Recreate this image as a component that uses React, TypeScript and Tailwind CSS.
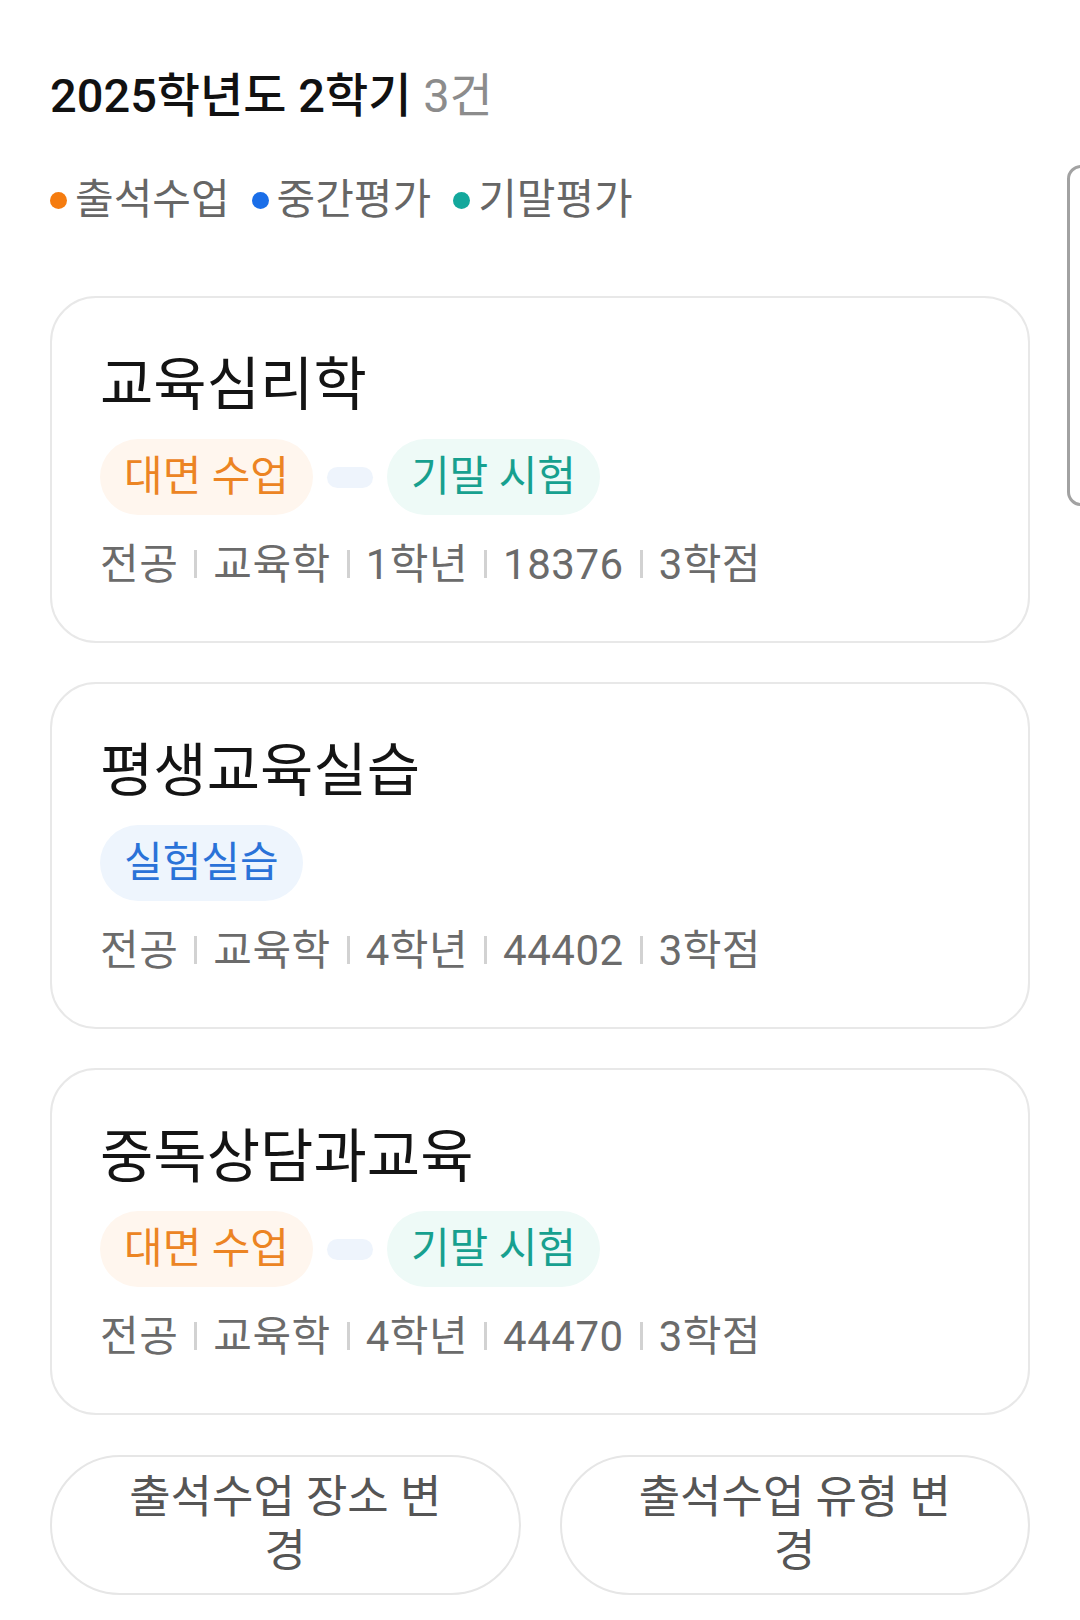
import React from 'react';

type Tag = { label: string; tone: 'orange' | 'teal' | 'blue' };

type Course = {
  name: string;
  tags: Tag[];
  meta: string[];
};

const courses: Course[] = [
  {
    name: '교육심리학',
    tags: [
      { label: '대면 수업', tone: 'orange' },
      { label: '기말 시험', tone: 'teal' },
    ],
    meta: ['전공', '교육학', '1학년', '18376', '3학점'],
  },
  {
    name: '평생교육실습',
    tags: [{ label: '실험실습', tone: 'blue' }],
    meta: ['전공', '교육학', '4학년', '44402', '3학점'],
  },
  {
    name: '중독상담과교육',
    tags: [
      { label: '대면 수업', tone: 'orange' },
      { label: '기말 시험', tone: 'teal' },
    ],
    meta: ['전공', '교육학', '4학년', '44470', '3학점'],
  },
];

function TagPill({ tag }: { tag: Tag }) {
  // 톤별 색상은 클래스 그대로 적어둔다 (동적 조합 금지)
  const cls =
    tag.tone === 'orange'
      ? 'bg-[#fff6ee] text-[#ec8423]'
      : tag.tone === 'teal'
        ? 'bg-[#eefaf7] text-[#17a08f]'
        : 'bg-[#eef5fd] text-[#2a72d8]';
  return (
    <span className={`flex h-[76px] items-center rounded-full px-[24px] text-[42px] leading-none ${cls}`}>
      {tag.label}
    </span>
  );
}

function CourseCard({ course }: { course: Course }) {
  return (
    <div className="flex h-[347px] flex-col rounded-[46px] border-2 border-[#e8e8e8] bg-white pl-[48px] pt-[53px]">
      <div className="text-[58px] font-normal leading-[68px] text-[#141414]">{course.name}</div>
      <div className="mt-[20px] flex items-center">
        {course.tags.map((t, i) => (
          <React.Fragment key={t.label}>
            {i > 0 && <span className="mx-[14px] h-[21px] w-[46px] rounded-full bg-[#eef4fc]" />}
            <TagPill tag={t} />
          </React.Fragment>
        ))}
      </div>
      <div className="mt-[22px] flex h-[54px] items-center text-[42px] text-[#6b6b6b]">
        {course.meta.map((m, i) => (
          <React.Fragment key={i}>
            {i > 0 && <span className="mx-[16px] h-[28px] w-[3px] bg-[#d2d2d2]" />}
            <span className="tracking-[0.5px]">{m}</span>
          </React.Fragment>
        ))}
      </div>
    </div>
  );
}

export default function App() {
  return (
    <div className="relative min-h-[1620px] w-[1080px] overflow-hidden bg-white font-['Roboto','Noto_Sans_CJK_KR','Noto_Sans',sans-serif]">
      {/* 오른쪽 가장자리 핸들 */}
      <div className="absolute left-[1067px] top-[165px] h-[341px] w-[40px] rounded-[14px] border-[3px] border-[#a2a2a2]" />

      <div className="px-[50px] pt-[66px]">
        <h1 className="text-[47px] font-medium leading-[60px] text-[#111]">
          2025학년도 2학기 <span className="font-normal text-[#8c8c8c]">3건</span>
        </h1>

        <div className="mt-[46px] flex items-center text-[42px] leading-[56px] text-[#666]">
          <span className="mr-[8px] h-[17px] w-[17px] rounded-full bg-[#f57c0f]" />
          <span>출석수업</span>
          <span className="ml-[22px] mr-[8px] h-[17px] w-[17px] rounded-full bg-[#1a6ee8]" />
          <span>중간평가</span>
          <span className="ml-[22px] mr-[8px] h-[17px] w-[17px] rounded-full bg-[#13a89c]" />
          <span>기말평가</span>
        </div>

        <div className="mt-[68px] flex flex-col gap-[39px]">
          {courses.map((c) => (
            <CourseCard key={c.name} course={c} />
          ))}
        </div>

        <div className="mt-[40px] grid grid-cols-2 gap-[39px]">
          <button className="flex h-[140px] items-center justify-center rounded-full border-2 border-[#e6e6e6] bg-white px-[66px] text-[45px] leading-[54px] text-[#555]">
            출석수업 장소 변경
          </button>
          <button className="flex h-[140px] items-center justify-center rounded-full border-2 border-[#e6e6e6] bg-white px-[66px] text-[45px] leading-[54px] text-[#555]">
            출석수업 유형 변경
          </button>
        </div>
      </div>
    </div>
  );
}
